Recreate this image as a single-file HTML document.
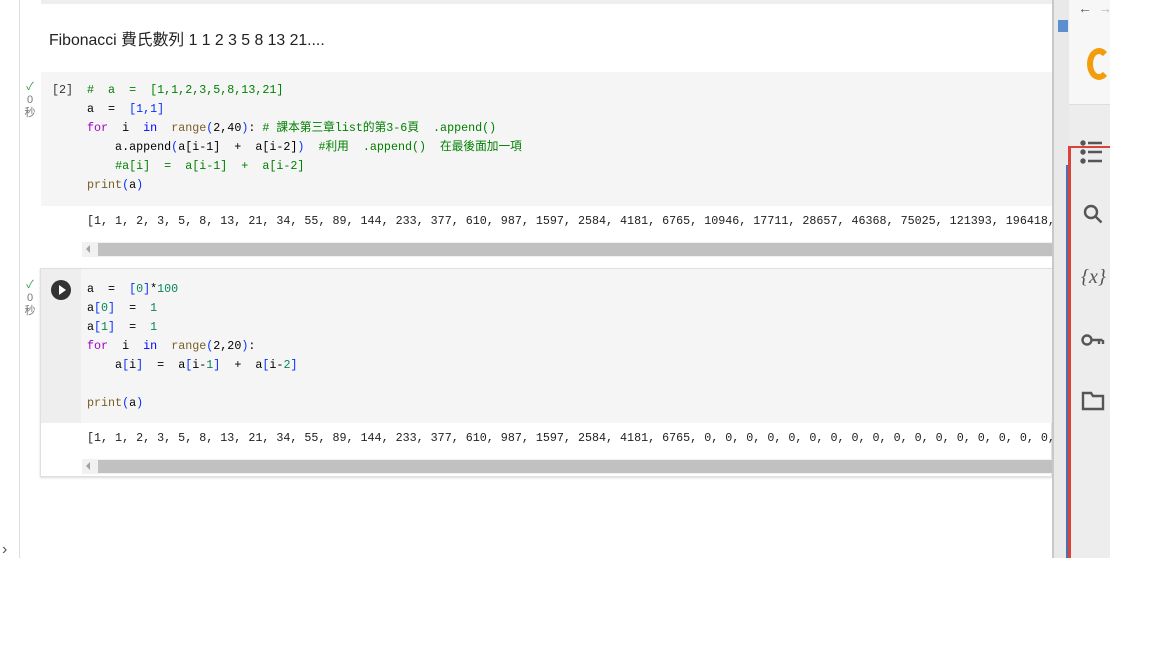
<!DOCTYPE html>
<html><head><meta charset="utf-8"><style>
*{margin:0;padding:0;box-sizing:border-box}
body{width:1152px;height:663px;background:#fff;position:relative;overflow:hidden;font-family:"Liberation Sans","Noto Sans CJK TC",sans-serif}
.a{position:absolute}
.code{position:absolute;font-family:"Liberation Mono","Noto Sans CJK TC",monospace;font-size:11.7px;white-space:pre;color:#000;line-height:19px}
.k{color:#a000c8}.b{color:#0000ff}.g{color:#098658}.c{color:#008000}.f{color:#795e26}.br{color:#0431fa}
.stat{position:absolute;left:23px;width:14px;text-align:center;font-size:11px;color:#777;line-height:13px}
</style></head><body>
<div class="a" style="left:19px;top:0;width:1px;height:558px;background:#ddd"></div>
<div class="a" style="left:41px;top:0;width:1011px;height:4px;background:#eee"></div>
<div class="a" style="left:49px;top:27px;font-size:15.8px;color:#222">Fibonacci 費氏數列 1 1 2 3 5 8 13 21....</div>

<!-- cell 1 -->
<div class="a" style="left:41px;top:72px;width:1011px;height:134px;background:#f5f5f5"></div>
<div class="stat" style="top:81px"><span style="color:#3a9a4a">✓</span><br>0<br>秒</div>
<div class="code" style="left:52px;top:81px;color:#333">[2]</div>
<div class="code" style="left:87px;top:81px"><span class="c">#  a  =  [1,1,2,3,5,8,13,21]</span>
a  =  <span class="br">[1,1]</span>
<span class="k">for</span>  i  <span class="b">in</span>  <span class="f">range</span><span class="br">(</span>2,40<span class="br">)</span>: <span class="c"># 課本第三章list的第3-6頁  .append()</span>
    a.append<span class="br">(</span>a[i-1]  +  a[i-2]<span class="br">)</span>  <span class="c">#利用  .append()  在最後面加一項</span>
    <span class="c">#a[i]  =  a[i-1]  +  a[i-2]</span>
<span class="f">print</span><span class="br">(</span>a<span class="br">)</span></div>
<div class="code" style="left:87px;top:212px;color:#212121">[1, 1, 2, 3, 5, 8, 13, 21, 34, 55, 89, 144, 233, 377, 610, 987, 1597, 2584, 4181, 6765, 10946, 17711, 28657, 46368, 75025, 121393, 196418,</div>
<div class="a" style="left:82px;top:242px;width:970px;height:15px;background:#f1f1f1"></div>
<div class="a" style="left:98px;top:243px;width:954px;height:13px;background:#c1c1c1"></div>
<div class="a" style="left:86px;top:245px;width:0;height:0;border:4px solid transparent;border-right:4px solid #a3a3a3;border-left:0"></div>

<!-- cell 2 -->
<div class="a" style="left:40px;top:268px;width:1012px;height:209px;border:1px solid #e0e0e0;box-shadow:0 1px 2px rgba(0,0,0,.15)"></div>
<div class="a" style="left:41px;top:269px;width:1011px;height:154px;background:#f5f5f5"></div>
<div class="a" style="left:41px;top:269px;width:40px;height:154px;background:#eeeeee"></div>
<div class="stat" style="top:279px"><span style="color:#3a9a4a">✓</span><br>0<br>秒</div>
<div class="a" style="left:51px;top:280px;width:20px;height:20px;border-radius:50%;background:#333"></div>
<div class="a" style="left:59px;top:285px;width:0;height:0;border-top:5px solid transparent;border-bottom:5px solid transparent;border-left:7px solid #fff"></div>
<div class="code" style="left:87px;top:280px">a  =  <span class="br">[</span><span class="g">0</span><span class="br">]</span>*<span class="g">100</span>
a<span class="br">[</span><span class="g">0</span><span class="br">]</span>  =  <span class="g">1</span>
a<span class="br">[</span><span class="g">1</span><span class="br">]</span>  =  <span class="g">1</span>
<span class="k">for</span>  i  <span class="b">in</span>  <span class="f">range</span><span class="br">(</span>2,20<span class="br">)</span>:
    a<span class="br">[</span>i<span class="br">]</span>  =  a<span class="br">[</span>i-<span class="g">1</span><span class="br">]</span>  +  a<span class="br">[</span>i-<span class="g">2</span><span class="br">]</span>

<span class="f">print</span><span class="br">(</span>a<span class="br">)</span></div>
<div class="code" style="left:87px;top:429px;color:#212121">[1, 1, 2, 3, 5, 8, 13, 21, 34, 55, 89, 144, 233, 377, 610, 987, 1597, 2584, 4181, 6765, 0, 0, 0, 0, 0, 0, 0, 0, 0, 0, 0, 0, 0, 0, 0, 0, 0, 0,</div>
<div class="a" style="left:82px;top:459px;width:970px;height:15px;background:#f1f1f1"></div>
<div class="a" style="left:98px;top:460px;width:954px;height:13px;background:#c1c1c1"></div>
<div class="a" style="left:86px;top:462px;width:0;height:0;border:4px solid transparent;border-right:4px solid #a3a3a3;border-left:0"></div>

<div class="a" style="left:2px;top:541px;font-size:16px;color:#555">›</div>

<!-- right panel -->
<div class="a" style="left:1052px;top:0;width:17px;height:558px;background:#e9e9e9;border-left:2px solid #c8c8c8"></div>
<div class="a" style="left:1066px;top:165px;width:2px;height:393px;background:#4a6fb5"></div>
<div class="a" style="left:1058px;top:20px;width:10px;height:12px;background:#5b8fd0"></div>
<div class="a" style="left:1069px;top:0;width:41px;height:558px;background:#ededed"></div>
<div class="a" style="left:1069px;top:0;width:41px;height:105px;background:#f7f7f7;border-bottom:1px solid #ddd"></div>
<div class="a" style="left:1078px;top:0;font-size:14px;color:#555">←</div>
<div class="a" style="left:1098px;top:0;font-size:14px;color:#bbb">→</div>
<div class="a" style="left:1087px;top:48px;width:24px;height:32px;border:6px solid #f29d0c;border-radius:50%;border-right-color:transparent"></div>
<div class="a" style="left:1068px;top:146px;width:42px;height:412px;border-left:3px solid #d9443a;border-top:2px solid #d9443a"></div>
<svg class="a" style="left:1080px;top:135px" width="30" height="300" viewBox="0 0 30 300" fill="none" stroke="#555" stroke-width="2.4">
<circle cx="3" cy="8" r="1.5" fill="#555"/><circle cx="3" cy="17" r="1.5" fill="#555"/><circle cx="3" cy="26" r="1.5" fill="#555"/>
<path d="M8 8h14M8 17h14M8 26h14" stroke="#555"/>
<circle cx="11" cy="77" r="6"/><path d="M15.5 81.5l6 6"/>
<text x="1" y="148" font-family="Liberation Serif" font-style="italic" font-size="20" fill="#555" stroke="none">{x}</text>
<circle cx="7" cy="205" r="4.5"/><path d="M11.5 205h11M19 205v4M23 205v4"/>
<path d="M3 258h8l2 3h10v13H3z"/>
</svg>
</body></html>
